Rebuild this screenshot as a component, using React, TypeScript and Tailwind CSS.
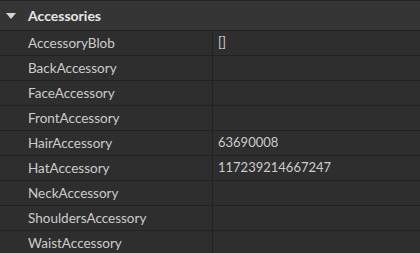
const rows: [string, string][] = [
  ["AccessoryBlob", "[]"],
  ["BackAccessory", ""],
  ["FaceAccessory", ""],
  ["FrontAccessory", ""],
  ["HairAccessory", "63690008"],
  ["HatAccessory", "117239214667247"],
  ["NeckAccessory", ""],
  ["ShouldersAccessory", ""],
  ["WaistAccessory", ""],
];

export default function App() {
  return (
    <div
      className="w-[420px] h-[253px] overflow-hidden bg-[#2e2e2e] text-[#cccccc]"
      style={{ fontFamily: "Lato, 'Noto Sans', sans-serif" }}
    >
      {/* Section header */}
      <div className="flex items-center h-[31px] bg-[#353535] border-t border-b border-[#222222]">
        <div className="w-[28px] pl-[6px] flex items-center">
          <svg width="10" height="6" viewBox="0 0 10 6">
            <path d="M0 0 H10 L5 6 Z" fill="#d4d4d4" />
          </svg>
        </div>
        <span className="font-bold text-[14px] text-[#e6e6e6]">Accessories</span>
      </div>

      {rows.map(([name, value]) => (
        <div key={name} className="flex h-[25px] border-b border-[#222222]">
          <div className="w-[213px] pl-[28px] flex items-center border-r border-[#222222] text-[13.5px]">
            {name}
          </div>
          <div className="flex-1 pl-[5px] flex items-center text-[13px]">{value}</div>
        </div>
      ))}
    </div>
  );
}
